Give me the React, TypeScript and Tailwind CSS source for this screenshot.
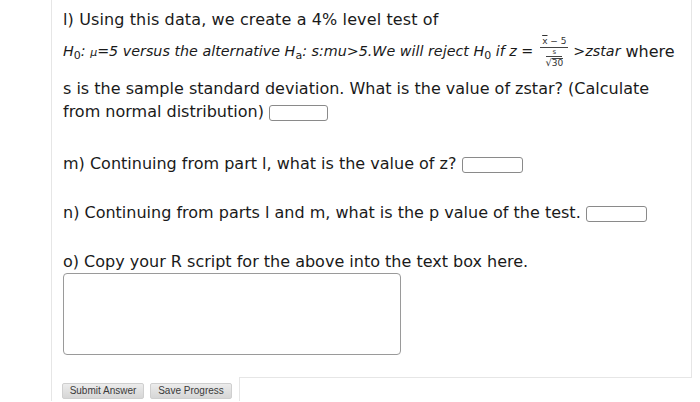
import React from "react";

const Box = ({ w }: { w: string }) => (
  <span className={`inline-block ${w} h-[16px] border border-[#8a8a8a] rounded-[3px] bg-white align-middle`} />
);

const Btn = ({ children }: { children: React.ReactNode }) => (
  <button className="w-[82px] h-[16px] bg-gradient-to-b from-[#ececec] to-[#d6d6d6] border border-[#cfcfcf] rounded-[2px] text-[10px] leading-[14px] text-[#3a3a3a] font-['Liberation_Sans',Arial,sans-serif]">
    {children}
  </button>
);

export default function App() {
  return (
    <div className="w-[700px] h-[402px] bg-white overflow-hidden font-['DejaVu_Sans',Verdana,sans-serif] text-[#1a1a1a]">
      <div className="ml-[51px] w-[641px]">
        <div className="border-l border-r border-[#e6e6e6] pl-[11px] pt-[8px] pb-[22px]">
          <div className="text-[16px] leading-[23px] tracking-[0.12px]">l) Using this data, we create a 4% level test of</div>
          <div className="flex items-center h-[30px] mt-[6px] text-[14.3px]">
            <span className="italic">
              H<sub className="not-italic text-[11px]">0</sub>: <span className="text-[11px]">μ</span>=5 versus the alternative H<sub className="not-italic text-[11px]">a</sub>: s:mu&gt;5.We will reject H<sub className="not-italic text-[11px]">0</sub> if z =
            </span>
            <span className="inline-flex flex-col items-center ml-[7px] mr-[5px] w-[28px] text-[9px] leading-[9px] text-[#333]">
              <span className="border-b border-[#444] w-full text-center pb-[1px]"><span className="overline">x</span> − 5</span>
              <span className="border-b border-[#444] w-[16px] text-center text-[7px] leading-[7px] pt-[1px]">s</span>
              <span className="flex items-end mt-[1px]"><span className="text-[10px] leading-[10px]">√</span><span className="border-t border-[#444] text-[9px] leading-[9px]">30</span></span>
            </span>
            <span className="italic">&gt;zstar</span>
            <span className="ml-[5px] text-[16px]">where</span>
          </div>
          <div className="text-[16px] leading-[23px] mt-[10px]">
            s is the sample standard deviation. What is the value of zstar? (Calculate
            <br />
            from normal distribution) <Box w="w-[59px]" />
          </div>
          <div className="text-[16px] leading-[23px] mt-[29px]">
            m) Continuing from part l, what is the value of z? <Box w="w-[61px]" />
          </div>
          <div className="text-[16px] leading-[23px] mt-[26px]">
            n) Continuing from parts l and m, what is the p value of the test. <Box w="w-[61px]" />
          </div>
          <div className="text-[16px] leading-[23px] mt-[26px]">
            o) Copy your R script for the above into the text box here.
          </div>
          <div className="w-[338px] h-[82px] border border-[#9a9a9a] rounded-[4px]" />
        </div>
        <div className="flex">
          <div className="w-[189px] border-l border-r border-[#e6e6e6] h-[24px] flex items-center gap-[6px] pl-[10px] pt-[3px]">
            <Btn>Submit Answer</Btn>
            <Btn>Save Progress</Btn>
          </div>
          <div className="flex-1 border-t border-[#e6e6e6]" />
        </div>
      </div>
    </div>
  );
}
